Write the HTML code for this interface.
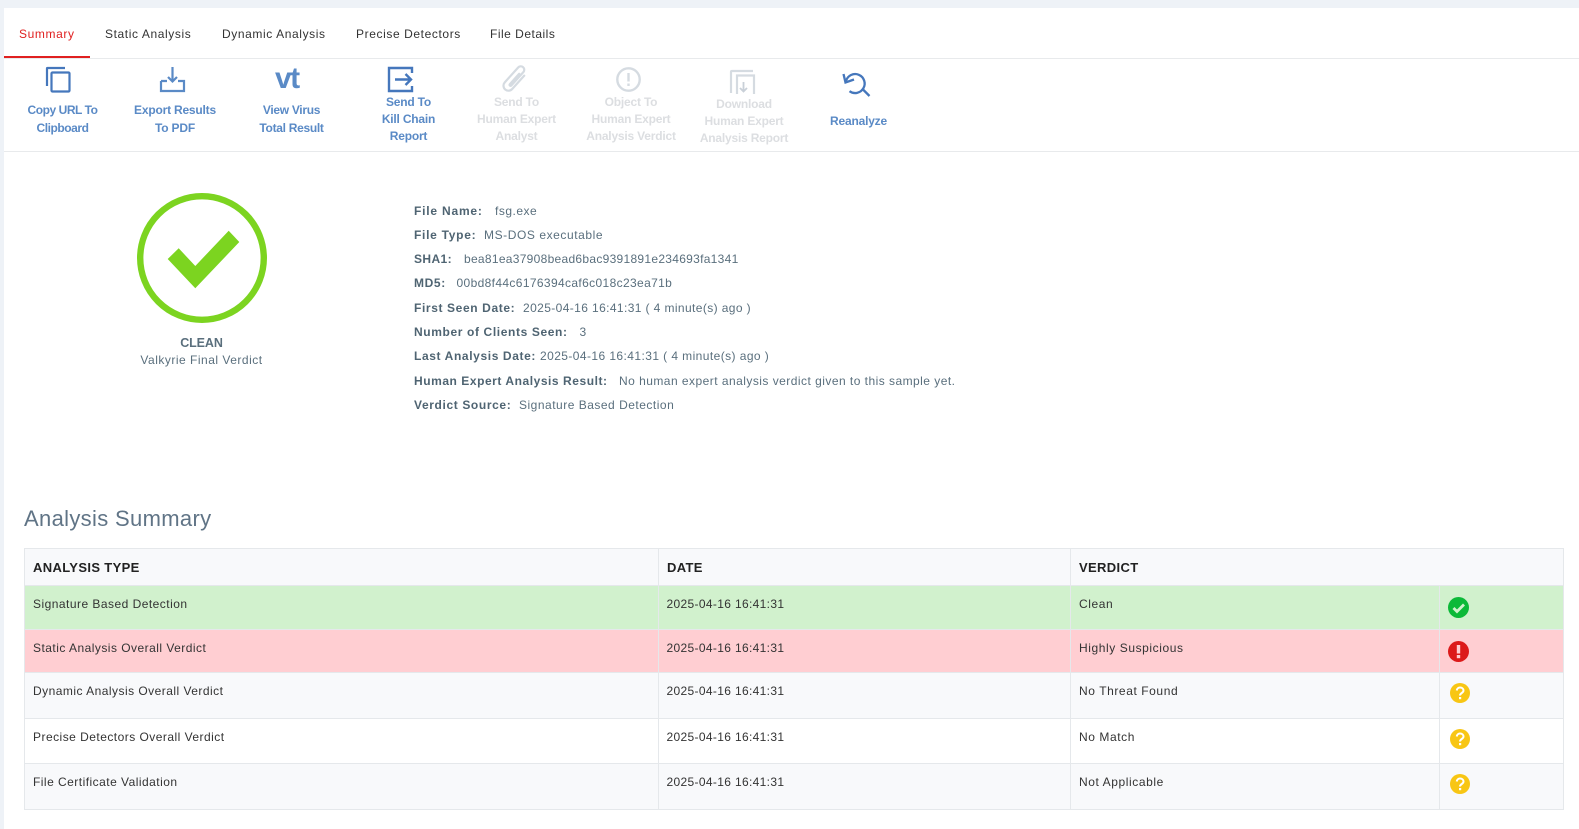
<!DOCTYPE html>
<html><head><meta charset="utf-8"><style>
html,body{margin:0;padding:0;background:#fff}
body{width:1579px;height:829px;position:relative;overflow:hidden;font-family:"Liberation Sans",sans-serif}
.a{position:absolute;white-space:nowrap}
.tab{top:25.500px;font-size:12px;line-height:16px;color:#333;letter-spacing:.6px}
.tb{position:absolute;text-align:center;font-size:12px;font-weight:bold;line-height:17px;color:#5a8ac6;white-space:nowrap;transform:translateX(-50%);letter-spacing:-.2px}
.dis{color:#dcdee1}
.l,.w{position:absolute;font-size:12px;line-height:16px;white-space:nowrap}
.l{left:414px;font-weight:bold;color:#4f6472;letter-spacing:.62px}
.w{color:#5a6f7d;letter-spacing:.5px}
.c{position:absolute;font-size:12px;line-height:16px;color:#333;white-space:nowrap;letter-spacing:.47px}
.d{left:666.500px;letter-spacing:.34px}
.e{left:1079px;letter-spacing:.58px}
.h{position:absolute;top:560px;font-size:13px;font-weight:bold;line-height:16px;color:#222;letter-spacing:.35px}
.r{position:absolute;left:24px;width:1539px;background:#f8f9fb}
.v{position:absolute;top:548px;height:262px;width:1px;background:#e5e8eb}
.hl{position:absolute;left:24px;width:1540px;height:1px;background:#e5e8eb}
svg{position:absolute;overflow:visible}
</style></head><body>
<div class="a" style="left:0;top:0;width:1579px;height:8px;background:#eef2f7"></div>
<div class="a" style="left:0;top:0;width:4px;height:829px;background:#eef2f7"></div>

<div class="a tab" style="left:19px;color:#e02020">Summary</div>
<div class="a tab" style="left:105px">Static Analysis</div>
<div class="a tab" style="left:222px">Dynamic Analysis</div>
<div class="a tab" style="left:356px">Precise Detectors</div>
<div class="a tab" style="left:490px;letter-spacing:.5px">File Details</div>
<div class="a" style="left:4px;top:58px;width:1575px;height:1px;background:#e8eaec"></div>
<div class="a" style="left:4px;top:56px;width:86px;height:2px;background:#e02020"></div>
<div class="a" style="left:4px;top:151px;width:1575px;height:1px;background:#e8eaec"></div>

<svg style="left:46px;top:67px" width="25" height="25" fill="none" stroke="#4577bc" stroke-width="2.2"><path d="M1 19V1.500Q1 1 1.500 1H19"/><rect x="5.500" y="5.500" width="18" height="19" rx="1"/></svg>
<svg style="left:160px;top:67px" width="25" height="25" fill="none" stroke="#5a8ac6" stroke-width="2.2"><path d="M1 14V24H24V14H18M7 14H1"/><path d="M12.500 0V14.500M8 10L12.500 14.500L17 10"/></svg>
<div class="a" style="left:275px;top:60px;font-size:30px;line-height:38px;font-weight:bold;color:#5a8ac6;letter-spacing:-1.500px">vt</div>
<svg style="left:387px;top:66px" width="27" height="27" fill="none" stroke="#4577bc" stroke-width="2.4"><path d="M25 7V2H2V25H25V20"/><path d="M8 13.500H24M18.500 8L24 13.500L18.500 19"/></svg>
<svg style="left:501px;top:66px" width="27" height="27" fill="none" stroke="#d5dbe1" stroke-width="2.2" stroke-linecap="round"><g transform="translate(13.500,13) rotate(42)"><path d="M5 -9V9A5 5 0 0 1 -5 9V-11A3.500 3.500 0 0 1 2 -11V7A1 1 0 0 1 0 7V-7"/></g></svg>
<svg style="left:615px;top:66px" width="27" height="27" fill="none" stroke="#d5dbe1" stroke-width="2.4"><circle cx="13.500" cy="13.500" r="11.200"/><path d="M13.500 7V15.500M13.500 17.500V20" stroke-width="2.400"/></svg>
<svg style="left:730px;top:70px" width="27" height="27" fill="none" stroke="#d5dbe1" stroke-width="2.200"><path d="M1 23V2Q1 1 2 1H23"/><path d="M7 24V5.500H24V24"/><path d="M13.500 12V21.500M10 18L13.500 21.500L17 18" stroke="#c9d0d8" stroke-width="1.800"/></svg>
<svg style="left:841px;top:71px" width="30" height="28" fill="none" stroke="#4577bc" stroke-width="2.300"><path d="M5 10A9.500 9.500 0 1 1 8.500 20.200"/><path d="M21 17.500L28.500 25"/><path d="M2.500 3L4.500 11.500L13 8.500"/></svg>

<div class="tb" style="left:62.500px;top:101px;line-height:18px;letter-spacing:-.45px">Copy URL To<br>Clipboard</div>
<div class="tb" style="left:175px;top:101px;line-height:18px">Export Results<br>To PDF</div>
<div class="tb" style="left:291.500px;top:101px;line-height:18px;letter-spacing:-.3px">View Virus<br>Total Result</div>
<div class="tb" style="left:408.500px;top:94px">Send To<br>Kill Chain<br>Report</div>
<div class="tb dis" style="left:516.500px;top:94px">Send To<br>Human Expert<br>Analyst</div>
<div class="tb dis" style="left:631px;top:94px">Object To<br>Human Expert<br>Analysis Verdict</div>
<div class="tb dis" style="left:744px;top:96px">Download<br>Human Expert<br>Analysis Report</div>
<div class="tb" style="left:858.500px;top:113px">Reanalyze</div>

<svg style="left:0;top:0" width="400" height="400"><circle cx="202" cy="258" r="61.800" fill="none" stroke="#7cd420" stroke-width="6.400"/><path d="M167.700 259L178.700 248.300L195.300 266L228.700 230.700L239.300 242L195.300 288.300Z" fill="#7cd420"/></svg>
<div class="a" style="left:0;top:335px;width:403px;text-align:center;font-size:12.500px;font-weight:bold;line-height:16px;color:#5a6f7d;letter-spacing:-.1px">CLEAN</div>
<div class="a" style="left:0;top:352px;width:403px;text-align:center;font-size:12px;line-height:16px;color:#5a6f7d;letter-spacing:.5px">Valkyrie Final Verdict</div>

<div class="l" style="top:203px;letter-spacing:.8px">File Name:</div><div class="w" style="top:203px;left:495px">fsg.exe</div>
<div class="l" style="top:227px;letter-spacing:.72px">File Type:</div><div class="w" style="top:227px;left:484px;letter-spacing:.57px">MS-DOS executable</div>
<div class="l" style="top:251px;letter-spacing:.4px">SHA1:</div><div class="w" style="top:251px;left:464px;letter-spacing:.29px">bea81ea37908bead6bac9391891e234693fa1341</div>
<div class="l" style="top:275px">MD5:</div><div class="w" style="top:275px;left:456.500px;letter-spacing:.36px">00bd8f44c6176394caf6c018c23ea71b</div>
<div class="l" style="top:300px">First Seen Date:</div><div class="w" style="top:300px;left:523px;letter-spacing:.39px">2025-04-16 16:41:31 ( 4 minute(s) ago )</div>
<div class="l" style="top:324px">Number of Clients Seen:</div><div class="w" style="top:324px;left:579.500px">3</div>
<div class="l" style="top:348px">Last Analysis Date:</div><div class="w" style="top:348px;left:540px;letter-spacing:.42px">2025-04-16 16:41:31 ( 4 minute(s) ago )</div>
<div class="l" style="top:373px;letter-spacing:.55px">Human Expert Analysis Result:</div><div class="w" style="top:373px;left:619px;letter-spacing:.465px">No human expert analysis verdict given to this sample yet.</div>
<div class="l" style="top:397px">Verdict Source:</div><div class="w" style="top:397px;left:519px">Signature Based Detection</div>

<div class="a" style="left:24px;top:504px;font-size:22px;line-height:30px;color:#607486;letter-spacing:.33px">Analysis Summary</div>

<div class="r" style="top:548px;height:37px"></div>
<div class="r" style="top:586px;height:43px;background:#d1f1cd"></div>
<div class="r" style="top:630px;height:42px;background:#ffced2"></div>
<div class="r" style="top:673px;height:45px"></div>
<div class="r" style="top:719px;height:44px;background:#fff"></div>
<div class="r" style="top:764px;height:45px"></div>
<div class="hl" style="top:548px"></div><div class="hl" style="top:585px"></div><div class="hl" style="top:629px"></div><div class="hl" style="top:672px"></div><div class="hl" style="top:718px"></div><div class="hl" style="top:763px"></div><div class="hl" style="top:809px"></div>
<div class="v" style="left:24px"></div><div class="v" style="left:658px"></div><div class="v" style="left:1070px"></div><div class="v" style="left:1439px;top:585px;height:225px"></div><div class="v" style="left:1563px"></div>

<div class="h" style="left:33px">ANALYSIS TYPE</div><div class="h" style="left:667px">DATE</div><div class="h" style="left:1079px">VERDICT</div>

<div class="c" style="left:33px;top:596px">Signature Based Detection</div><div class="c d" style="top:596px">2025-04-16 16:41:31</div><div class="c e" style="top:596px">Clean</div>
<div class="c" style="left:33px;top:640px">Static Analysis Overall Verdict</div><div class="c d" style="top:640px">2025-04-16 16:41:31</div><div class="c e" style="top:640px">Highly Suspicious</div>
<div class="c" style="left:33px;top:682.500px">Dynamic Analysis Overall Verdict</div><div class="c d" style="top:682.500px">2025-04-16 16:41:31</div><div class="c e" style="top:682.500px">No Threat Found</div>
<div class="c" style="left:33px;top:728.500px">Precise Detectors Overall Verdict</div><div class="c d" style="top:728.500px">2025-04-16 16:41:31</div><div class="c e" style="top:728.500px">No Match</div>
<div class="c" style="left:33px;top:774px">File Certificate Validation</div><div class="c d" style="top:774px">2025-04-16 16:41:31</div><div class="c e" style="top:774px">Not Applicable</div>

<svg style="left:1448px;top:597px" width="21" height="21"><circle cx="10.500" cy="10.500" r="10.500" fill="#0cb938"/><path d="M5.500 11L9 14.500L16 7.500" fill="none" stroke="#d1f1cd" stroke-width="2.800"/></svg>
<svg style="left:1448px;top:641px" width="21" height="21"><circle cx="10.500" cy="10.500" r="10.500" fill="#dc1a1a"/><rect x="8.800" y="4" width="3.400" height="8.500" fill="#ffced2"/><rect x="8.800" y="14" width="3.400" height="3.200" fill="#ffced2"/></svg>
<svg style="left:1450px;top:683px" width="20" height="20"><circle cx="10" cy="10" r="10" fill="#f8c614"/><path d="M6.800 7.500C7 5.500 8.500 4.500 10 4.500C12 4.500 13.500 5.800 13.500 7.500C13.500 10 10 10 10 12.500" fill="none" stroke="#fff" stroke-width="2"/><rect x="9" y="14" width="2.200" height="2.200" fill="#fff"/></svg>
<svg style="left:1450px;top:729px" width="20" height="20"><circle cx="10" cy="10" r="10" fill="#f8c614"/><path d="M6.800 7.500C7 5.500 8.500 4.500 10 4.500C12 4.500 13.500 5.800 13.500 7.500C13.500 10 10 10 10 12.500" fill="none" stroke="#fff" stroke-width="2"/><rect x="9" y="14" width="2.200" height="2.200" fill="#fff"/></svg>
<svg style="left:1450px;top:774px" width="20" height="20"><circle cx="10" cy="10" r="10" fill="#f8c614"/><path d="M6.800 7.500C7 5.500 8.500 4.500 10 4.500C12 4.500 13.500 5.800 13.500 7.500C13.500 10 10 10 10 12.500" fill="none" stroke="#fff" stroke-width="2"/><rect x="9" y="14" width="2.200" height="2.200" fill="#fff"/></svg>
</body></html>
